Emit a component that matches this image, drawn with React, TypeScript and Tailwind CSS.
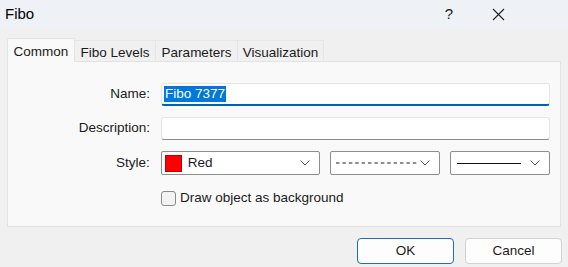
import React from "react";

const Chevron = () => (
  <svg width="10" height="6" viewBox="0 0 10 6" className="shrink-0">
    <path d="M0.5 0.5 L5 5 L9.5 0.5" fill="none" stroke="#5c5c5c" strokeWidth="1" />
  </svg>
);

const Tab = ({ label, width, active }: { label: string; width: string; active?: boolean }) =>
  active ? (
    <div className={`${width} h-[24px] text-center pt-[3px] bg-[#f9f9f9] border border-b-0 border-[#e3e3e3] rounded-t-[2px] -mb-px relative z-10`}>
      {label}
    </div>
  ) : (
    <div className={`${width} h-[21px] mt-[2px] text-center pt-[2px] bg-[#f0f0f0] border border-b-0 border-l-0 border-[#e6e6e6]`}>
      {label}
    </div>
  );

const App = () => {
  return (
    <div className="w-[568px] h-[267px] bg-[#f0f0f0] flex flex-col text-[13.5px] text-[#1b1b1b] font-['Liberation_Sans',Arial,sans-serif] overflow-hidden">
      {/* title bar */}
      <div className="h-[28px] flex items-center justify-between bg-[#eef2f6] pl-[5px]">
        <span className="text-[15px] text-black">Fibo</span>
        <div className="flex items-center h-full">
          <span className="text-[15px] w-[20px] text-center">?</span>
          <svg width="13" height="13" viewBox="0 0 13 13" className="ml-[33px] mr-[63px]">
            <path d="M1 1 L12 12 M12 1 L1 12" stroke="#222" strokeWidth="1.1" />
          </svg>
        </div>
      </div>

      {/* tabs */}
      <div className="flex items-start pl-[7px] mt-[10px] h-[23px]">
        <Tab label="Common" width="w-[68px]" active />
        <Tab label="Fibo Levels" width="w-[81px]" />
        <Tab label="Parameters" width="w-[82px]" />
        <Tab label="Visualization" width="w-[86px]" />
      </div>

      {/* panel */}
      <div className="mx-[7px] h-[166px] bg-[#f9f9f9] border border-[#e3e3e3] pt-[21px] pr-[10px] flex flex-col">
        <div className="flex items-center h-[23px]">
          <div className="w-[142px] text-right">Name:</div>
          <div className="ml-[11px] flex-1 h-[23px] bg-white border border-[#e5e5e5] border-b-2 border-b-[#005fb8] rounded-[3px] flex items-center pl-[2px]">
            <span className="bg-[#0078d7] text-white leading-[16px] px-[1px]">Fibo 7377</span>
          </div>
        </div>
        <div className="flex items-center h-[23px] mt-[11px]">
          <div className="w-[142px] text-right">Description:</div>
          <div className="ml-[11px] flex-1 h-[23px] bg-white border border-[#e5e5e5] border-b-[#8a8a8a] rounded-[3px]" />
        </div>
        <div className="flex items-center h-[24px] mt-[11px]">
          <div className="w-[142px] text-right">Style:</div>
          <div className="ml-[11px] w-[160px] h-[24px] bg-white border border-[#8d8d8d] rounded-[2px] flex items-center pl-[3px] pr-[9px]">
            <div className="w-[17px] h-[17px] bg-[#ff0000] border border-[#c00000]" />
            <span className="ml-[6px] flex-1">Red</span>
            <Chevron />
          </div>
          <div className="ml-[10px] w-[110px] h-[24px] bg-white border border-[#8d8d8d] rounded-[2px] flex items-center pl-[5px] pr-[9px]">
            <svg width="82" height="2" viewBox="0 0 82 2">
              <line x1="0" y1="1" x2="82" y2="1" stroke="#222" strokeWidth="1" strokeDasharray="3.5 2.9" />
            </svg>
            <div className="flex-1" />
            <Chevron />
          </div>
          <div className="ml-[10px] w-[100px] h-[24px] bg-white border border-[#8d8d8d] rounded-[2px] flex items-center pl-[6px] pr-[9px]">
            <div className="w-[64px] border-t border-[#111]" />
            <div className="flex-1" />
            <Chevron />
          </div>
        </div>
        <div className="flex items-center mt-[13px] ml-[153px]">
          <div className="w-[15px] h-[15px] rounded-[3px] border border-[#8a8a8a] bg-[#f3f3f3]" />
          <span className="ml-[4px]">Draw object as background</span>
        </div>
      </div>

      {/* buttons */}
      <div className="flex justify-end mt-[11px] pr-[6px] gap-[11px]">
        <div className="w-[97px] h-[26px] rounded-[4px] border border-[#1f6fb8] bg-[#fdfdfd] flex items-center justify-center">
          OK
        </div>
        <div className="w-[97px] h-[26px] rounded-[4px] border border-[#d2d2d2] bg-[#fdfdfd] flex items-center justify-center">
          Cancel
        </div>
      </div>
    </div>
  );
};

export default App;
